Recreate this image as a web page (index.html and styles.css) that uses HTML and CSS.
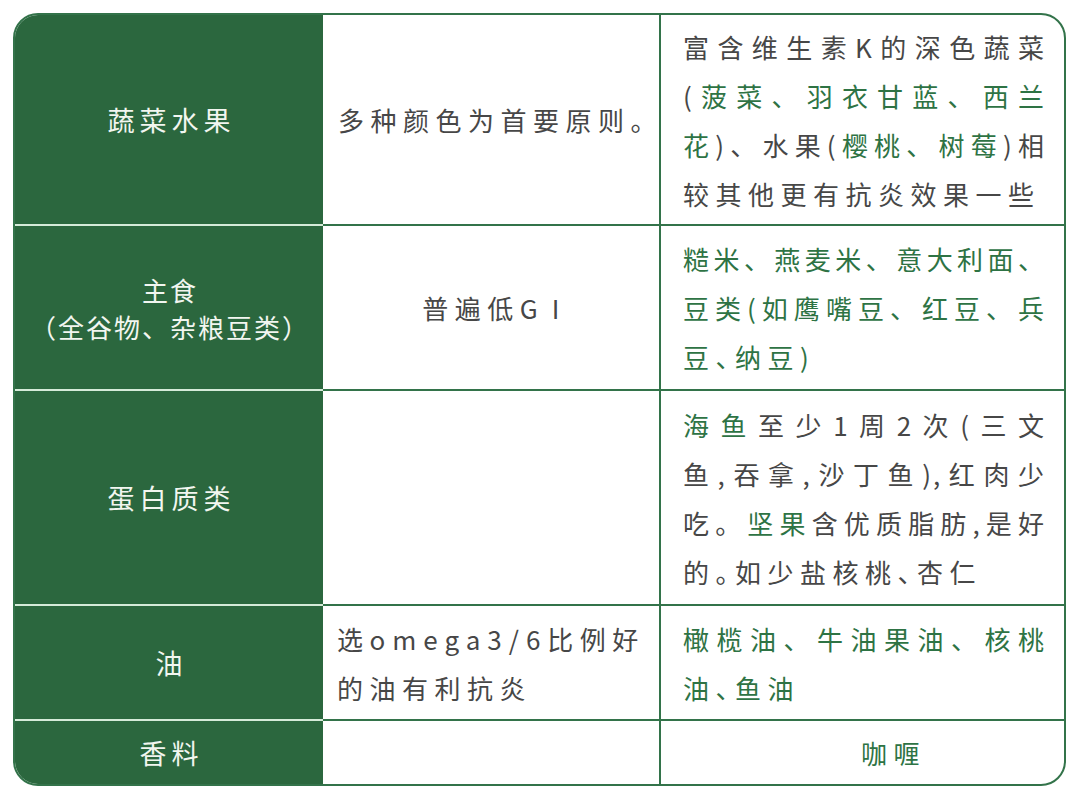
FILE: index.html
```html
<!DOCTYPE html>
<html lang="zh-CN">
<head>
<meta charset="utf-8">
<title>抗炎饮食</title>
<link rel="stylesheet" href="styles.css">
</head>
<body>
<div class="table">
  <div class="head">蔬菜水果</div>
  <div class="cell mid"><div class="ln">多种颜色为首要原则。</div></div>
  <div class="cell note">
    <div class="ln j">富含维生素K的深色蔬菜</div>
    <div class="ln j">(<span class="g">菠菜、羽衣甘蓝、西兰</span></div>
    <div class="ln j"><span class="g">花</span>)、水果(<span class="g">樱桃、树莓</span>)相</div>
    <div class="ln">较其他更有抗炎效果一些</div>
  </div>

  <div class="head tight">
    <div>主食</div>
    <div>（全谷物、杂粮豆类）</div>
  </div>
  <div class="cell mid"><div class="ln">普遍低<span class="wide">G</span>I</div></div>
  <div class="cell note g">
    <div class="ln j">糙米、燕麦米、意大利面、</div>
    <div class="ln j">豆类(如鹰嘴豆、红豆、兵</div>
    <div class="ln">豆、纳豆)</div>
  </div>

  <div class="head">蛋白质类</div>
  <div class="cell mid"></div>
  <div class="cell note">
    <div class="ln j"><span class="g">海鱼</span>至少1周2次(三文</div>
    <div class="ln j">鱼,吞拿,沙丁鱼),红肉少</div>
    <div class="ln j">吃。<span class="g">坚果</span>含优质脂肪,是好</div>
    <div class="ln">的。如少盐核桃、杏仁</div>
  </div>

  <div class="head">油</div>
  <div class="cell left">
    <div class="ln">选<span class="latin">omega3/6</span>比例好</div>
    <div class="ln">的油有利抗炎</div>
  </div>
  <div class="cell note g">
    <div class="ln j">橄榄油、牛油果油、核桃</div>
    <div class="ln">油、鱼油</div>
  </div>

  <div class="head last">香料</div>
  <div class="cell mid last"></div>
  <div class="cell note spice g last"><div class="ln">咖喱</div></div>
</div>
</body>
</html>
```

FILE: styles.css
```css
* {
  box-sizing: border-box;
}

html,
body {
  margin: 0;
  background: #ffffff;
}

body {
  padding: 13px;
  font-family: "Noto Sans CJK SC", "Noto Sans", sans-serif;
}

.table {
  display: grid;
  grid-template-columns: 308px 336px 405px;
  grid-template-rows: 211px 165px 215px 115px 63px;
  width: 1053px;
  border: 2px solid #33734a;
  border-radius: 25px;
  overflow: hidden;
  background: #ffffff;
}

.head {
  display: flex;
  flex-direction: column;
  align-items: center;
  justify-content: center;
  background: #2b673e;
  color: #f2f6f0;
  font-size: 27px;
  letter-spacing: 5px;
  line-height: 49px;
  padding-left: 5px;
  border-bottom: 2px solid #d5ebd9;
  text-align: center;
  white-space: nowrap;
}

.head.tight {
  font-size: 26px;
  letter-spacing: 2px;
  line-height: 37px;
  padding-left: 2px;
  text-spacing-trim: space-all;
}

.cell {
  display: flex;
  flex-direction: column;
  justify-content: center;
  color: #474747;
  font-size: 26px;
  letter-spacing: 6.5px;
  line-height: 49px;
  border-bottom: 2px solid #33734a;
  white-space: nowrap;
}

.cell.mid {
  align-items: center;
  padding-left: 6px;
}

.cell.left {
  padding-left: 14px;
}

.cell.note {
  border-left: 2px solid #33734a;
  padding: 0 18px 0 22px;
}

.cell.spice {
  align-items: center;
  padding-left: 84px;
  padding-right: 22px;
}

.last {
  border-bottom: 0;
}

.ln {
  white-space: nowrap;
  font-feature-settings: "halt";
}

.ln.j {
  letter-spacing: 2px;
  text-align: justify;
  text-align-last: justify;
  font-feature-settings: normal;
}

.g {
  color: #2e7344;
}

.latin {
  letter-spacing: 7px;
}

.wide {
  letter-spacing: 14px;
}
```
